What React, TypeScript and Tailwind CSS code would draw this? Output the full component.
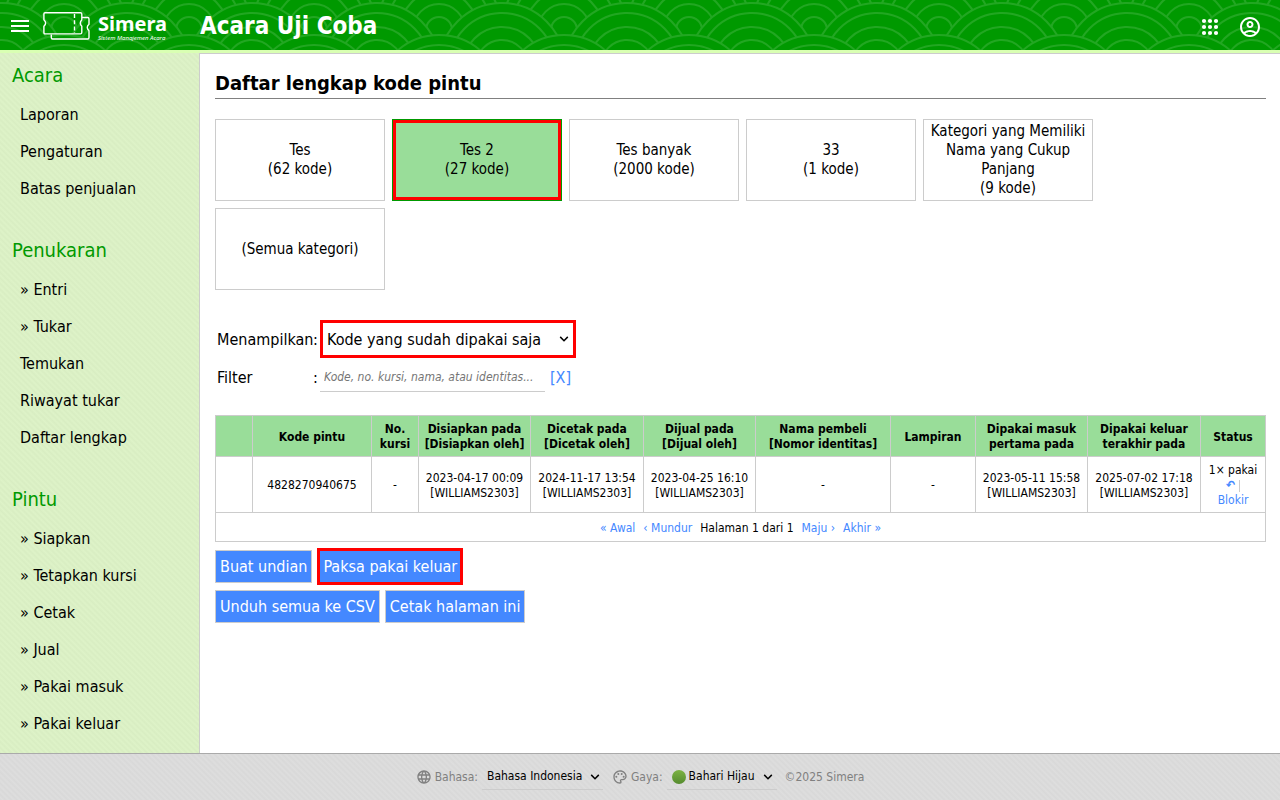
import type { ReactNode } from "react";
import { MdLanguage, MdMenu, MdOutlineAccountCircle, MdOutlinePalette } from "react-icons/md";

const menu = [
  { title: "Acara", items: ["Laporan", "Pengaturan", "Batas penjualan"] },
  { title: "Penukaran", items: ["» Entri", "» Tukar", "Temukan", "Riwayat tukar", "Daftar lengkap"] },
  { title: "Pintu", items: ["» Siapkan", "» Tetapkan kursi", "» Cetak", "» Jual", "» Pakai masuk", "» Pakai keluar"] },
];

const categories = [
  { name: "Tes", count: "(62 kode)" },
  { name: "Tes 2", count: "(27 kode)", active: true },
  { name: "Tes banyak", count: "(2000 kode)" },
  { name: "33", count: "(1 kode)" },
  { name: "Kategori yang Memiliki Nama yang Cukup Panjang", count: "(9 kode)" },
  { name: "(Semua kategori)", count: "" },
];

const columns = [
  { width: "w-[37px]", lines: [""] },
  { width: "w-[119px]", lines: ["Kode pintu"] },
  { width: "w-[47px]", lines: ["No.", "kursi"] },
  { width: "w-[112px]", lines: ["Disiapkan pada", "[Disiapkan oleh]"] },
  { width: "w-[113px]", lines: ["Dicetak pada", "[Dicetak oleh]"] },
  { width: "w-[112px]", lines: ["Dijual pada", "[Dijual oleh]"] },
  { width: "w-[135px]", lines: ["Nama pembeli", "[Nomor identitas]"] },
  { width: "w-[85px]", lines: ["Lampiran"] },
  { width: "w-[112px]", lines: ["Dipakai masuk", "pertama pada"] },
  { width: "w-[113px]", lines: ["Dipakai keluar", "terakhir pada"] },
  { width: "w-[65px]", lines: ["Status"] },
];

const row = [
  [""],
  ["4828270940675"],
  ["-"],
  ["2023-04-17 00:09", "[WILLIAMS2303]"],
  ["2024-11-17 13:54", "[WILLIAMS2303]"],
  ["2023-04-25 16:10", "[WILLIAMS2303]"],
  ["-"],
  ["-"],
  ["2023-05-11 15:58", "[WILLIAMS2303]"],
  ["2025-07-02 17:18", "[WILLIAMS2303]"],
];

const waveRows = [
  { top: -33, centers: [-61, 64, 189] },
  { top: 3, centers: [2, 127] },
  { top: 35, centers: [-61, 64, 189] },
];

function WavePattern() {
  return (
    <svg className="absolute inset-0 h-full w-full" aria-hidden="true">
      <defs>
        <pattern id="waves" width="125" height="50" patternUnits="userSpaceOnUse">
          <rect width="125" height="50" fill="#009900" />
          {waveRows.map((r) =>
            r.centers.map((cx) =>
              [63, 53, 39, 26, 13].map((radius) => (
                <circle
                  key={`${r.top} ${cx} ${radius}`}
                  cx={cx}
                  cy={r.top + 63}
                  r={radius}
                  fill="#009900"
                  stroke="#22a722"
                  strokeWidth="2"
                />
              )),
            ),
          )}
        </pattern>
      </defs>
      <rect width="100%" height="100%" fill="url(#waves)" />
    </svg>
  );
}

function TicketLogo() {
  return (
    <svg width="48" height="30" viewBox="0 0 48 30" fill="none" stroke="#fff" strokeWidth="1.4" strokeLinejoin="round" aria-hidden="true">
      <path d="M2 1.700H37.500Q38.800 1.700 38.800 3V8.700Q35.800 12 38.800 15.300V21.500Q38.800 22.900 37.500 22.900H2Q.9 22.900 .9 21.500V15.300Q4.400 12 .9 8.700V3Q.9 1.700 2 1.700Z" />
      <path d="M31.500 3V22" strokeDasharray="4 2.200" />
      <path d="M39 6.500H44.700Q46 6.500 46 8V13.300Q42.500 16.500 46 19.700V26.500Q46 28 44.700 28H9.500Q8.300 28 8.300 26.500V23.500" />
    </svg>
  );
}

function AppsIcon() {
  return (
    <svg width="24" height="24" viewBox="0 0 24 24" fill="currentColor" aria-hidden="true">
      {[6, 12, 18].map((cy) => [6, 12, 18].map((cx) => <circle key={`${cx} ${cy}`} cx={cx} cy={cy} r="2.1" />))}
    </svg>
  );
}

function Chevron({ className }: { className: string }) {
  return (
    <svg className={`pointer-events-none absolute top-1/2 -translate-y-1/2 ${className}`} width="10" height="6" viewBox="0 0 10 6" fill="none" stroke="#000" strokeWidth="1.5" aria-hidden="true">
      <path d="M1.200 .9L5 4.700L8.800 .9" />
    </svg>
  );
}

function Link({ children }: { children: ReactNode }) {
  return (
    <a href="#" className="text-[#4488ff]">
      {children}
    </a>
  );
}

function Lines({ lines }: { lines: string[] }) {
  return (
    <>
      {lines.map((line) => (
        <span key={line} className="block whitespace-nowrap">
          {line}
        </span>
      ))}
    </>
  );
}

const buttonClass = "h-[33px] border border-[#cccccc] bg-[#4488ff] px-1 text-white";

export default function App() {
  return (
    <div className="flex min-h-screen flex-col bg-white font-['DejaVu_Sans_Condensed','DejaVu_Sans',sans-serif] text-[16px] leading-[19px] text-black">
      <header className="relative h-[53px] border-b-[3px] border-[#d9ffb3] bg-[#009900]">
        <WavePattern />
        <div className="relative flex h-full items-center text-white">
          <button aria-label="Menu" className="flex w-10 justify-center pt-[2px]">
            <MdMenu size={24} />
          </button>
          <a href="#" className="flex w-[160px] items-center pt-px pl-[3px] font-['Noto_Sans','Open_Sans',sans-serif]">
            <TicketLogo />
            <span className="flex flex-col pl-[7px]">
              <span className="text-[20px] leading-[27px] font-bold">Simera</span>
              <span className="-mt-[3px] text-[6px] leading-[8px] whitespace-nowrap italic">Sistem Manajemen Acara</span>
            </span>
          </a>
          <h1 className="flex-1 pt-[2px] text-[24px] leading-[30px] font-bold">Acara Uji Coba</h1>
          <div className="flex gap-4 pt-[3px] pr-[18px]">
            <button aria-label="Aplikasi">
              <AppsIcon />
            </button>
            <button aria-label="Akun">
              <MdOutlineAccountCircle size={24} />
            </button>
          </div>
        </div>
      </header>

      <div className="flex flex-1">
        <nav className="flex w-[199px] shrink-0 flex-col gap-[23px] bg-[#dcf1c6] bg-[repeating-linear-gradient(45deg,#d8edc2_0px,#def3c8_2px,#d8edc2_4px)] pt-[2px] pb-2">
          {menu.map((section) => (
            <section key={section.title}>
              <h2 className="pl-3 text-[20px] leading-[41px] text-[#009900]">{section.title}</h2>
              <ul>
                {section.items.map((item) => (
                  <li key={item}>
                    <a href="#" className="block pl-5 leading-[37px]">
                      {item}
                    </a>
                  </li>
                ))}
              </ul>
            </section>
          ))}
        </nav>

        <main className="min-w-0 flex-1 border-t border-l border-[#cccccc] pt-[14px] pr-[14px] pb-4 pl-[15px]">
          <h2 className="border-b border-[#808080] text-[20px] leading-[30px] font-bold">Daftar lengkap kode pintu</h2>

          <div className="mt-5 flex flex-wrap gap-[7px] text-[15px]">
            {categories.map((c) => (
              <button
                key={c.name}
                className={
                  c.active
                    ? "h-[82px] w-[170px] border border-[#009900] bg-[#99dd99] inset-ring-[3px] inset-ring-[#ff0000]"
                    : "h-[82px] w-[170px] border border-[#cccccc] px-1"
                }
              >
                <span className="block">{c.name}</span>
                <span className="block">{c.count}</span>
              </button>
            ))}
          </div>

          <div className="mt-[30px] grid grid-cols-[96px_7px_auto] items-center justify-start gap-y-1 pl-[2px]">
            <label htmlFor="show">Menampilkan</label>
            <span>:</span>
            <span className="relative w-[256px]">
              <select id="show" className="h-[38px] w-full appearance-none border-[3px] border-[#ff0000] bg-white pl-1">
                <option>Kode yang sudah dipakai saja</option>
              </select>
              <Chevron className="right-[7px]" />
            </span>
            <label htmlFor="filter">Filter</label>
            <span>:</span>
            <div className="flex items-center gap-[5px]">
              <input
                id="filter"
                className="h-[30px] w-[225px] border-b border-[#cccccc] px-1 text-[12px] placeholder:text-[#757575] placeholder:italic"
                placeholder="Kode, no. kursi, nama, atau identitas..."
              />
              <Link>[X]</Link>
            </div>
          </div>

          <table className="mt-[23px] w-full table-fixed border-collapse text-center text-[12px] leading-[15px]">
            <thead>
              <tr className="h-[41px] bg-[#99dd99]">
                {columns.map((c, i) => (
                  <th key={i} className={`${c.width} border border-[#cccccc] px-0 pt-[2px] pb-0`}>
                    <Lines lines={c.lines} />
                  </th>
                ))}
              </tr>
            </thead>
            <tbody>
              <tr className="h-[56px]">
                {row.map((lines, i) => (
                  <td key={i} className="border border-[#cccccc] px-0 pt-[2px] pb-0">
                    <Lines lines={lines} />
                  </td>
                ))}
                <td className="border border-[#cccccc] px-0 pt-[2px] pb-0">
                  <span className="block">1× pakai</span>
                  <span className="flex items-center justify-center gap-1 font-bold">
                    <Link>↶</Link>
                    <span className="h-3 w-px bg-[#cccccc]" />
                  </span>
                  <Link>Blokir</Link>
                </td>
              </tr>
            </tbody>
            <tfoot>
              <tr className="h-[29px]">
                <td colSpan={11} className="border border-[#cccccc] px-0 pt-[2px] pb-0">
                  <span className="flex justify-center gap-2">
                    <Link>« Awal</Link>
                    <Link>‹ Mundur</Link>
                    <span>Halaman 1 dari 1</span>
                    <Link>Maju ›</Link>
                    <Link>Akhir »</Link>
                  </span>
                </td>
              </tr>
            </tfoot>
          </table>

          <div className="mt-[6px] flex items-center gap-[5px]">
            <button className={buttonClass}>Buat undian</button>
            <button className="h-[37px] border-[3px] border-[#ff0000] bg-[#4488ff] px-[3px] text-white">Paksa pakai keluar</button>
          </div>
          <div className="mt-[5px] flex gap-[5px]">
            <button className={buttonClass}>Unduh semua ke CSV</button>
            <button className={buttonClass}>Cetak halaman ini</button>
          </div>
        </main>
      </div>

      <footer className="flex h-[47px] items-center justify-center border-t border-[#aaaaaa] bg-[#dadada] bg-[repeating-linear-gradient(45deg,#d8d8d8_0px,#dedede_2px,#d8d8d8_4px)] text-[12px] leading-[15px] text-[#808080]">
        <MdLanguage size={16} />
        <label htmlFor="language" className="pr-1 pl-[3px]">
          Bahasa:
        </label>
        <span className="relative w-[121px]">
          <select id="language" className="h-[26px] w-full appearance-none border-b border-[#cccccc] bg-transparent pl-[5px] text-black">
            <option>Bahasa Indonesia</option>
          </select>
          <Chevron className="right-[3px]" />
        </span>
        <MdOutlinePalette size={16} className="ml-[9px]" />
        <label htmlFor="theme" className="pr-1 pl-[3px]">
          Gaya:
        </label>
        <span className="relative flex h-[26px] w-[110px] items-center border-b border-[#cccccc] pl-[5px]">
          <span className="h-[14px] w-[14px] shrink-0 rounded-full bg-linear-to-b from-[#7cb342] to-[#558b2f]" />
          <select id="theme" className="min-w-0 flex-1 appearance-none bg-transparent pl-[3px] text-black">
            <option>Bahari Hijau</option>
          </select>
          <Chevron className="right-[4px]" />
        </span>
        <span className="pl-2">©2025 Simera</span>
      </footer>
    </div>
  );
}
